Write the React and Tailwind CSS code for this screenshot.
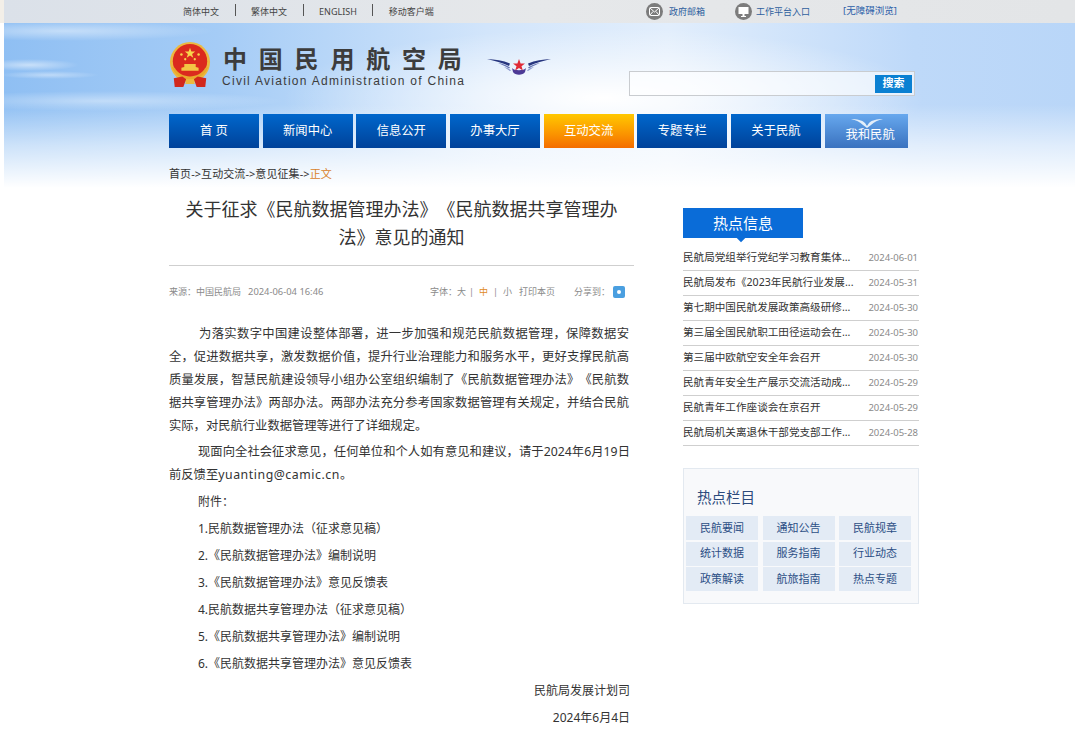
import React from 'react';

const cjk = { fontFamily: '"Noto Sans", "Noto Sans CJK SC", sans-serif' };

const topLinks = ['简体中文', '繁体中文', 'ENGLISH', '移动客户端'];

const navItems = ['首 页', '新闻中心', '信息公开', '办事大厅', '互动交流', '专题专栏', '关于民航'];

const hotNews = [
  ['民航局党组举行党纪学习教育集体...', '2024-06-01'],
  ['民航局发布《2023年民航行业发展...', '2024-05-31'],
  ['第七期中国民航发展政策高级研修...', '2024-05-30'],
  ['第三届全国民航职工田径运动会在...', '2024-05-30'],
  ['第三届中欧航空安全年会召开', '2024-05-30'],
  ['民航青年安全生产展示交流活动成...', '2024-05-29'],
  ['民航青年工作座谈会在京召开', '2024-05-29'],
  ['民航局机关离退休干部党支部工作...', '2024-05-28'],
];

const hotColumns = ['民航要闻', '通知公告', '民航规章', '统计数据', '服务指南', '行业动态', '政策解读', '航旅指南', '热点专题'];

const attachments = [
  '1.民航数据管理办法（征求意见稿）',
  '2.《民航数据管理办法》编制说明',
  '3.《民航数据管理办法》意见反馈表',
  '4.民航数据共享管理办法（征求意见稿）',
  '5.《民航数据共享管理办法》编制说明',
  '6.《民航数据共享管理办法》意见反馈表',
];

function Emblem() {
  return (
    <svg width="42" height="45" viewBox="0 0 44 47" className="shrink-0">
      <circle cx="22" cy="21" r="21" fill="#ecb93f" />
      <circle cx="22" cy="20" r="18" fill="#db2a1e" />
      <polygon points="22,6 23.400,10 27.500,10 24.200,12.500 25.400,16.500 22,14 18.600,16.500 19.800,12.500 16.500,10 20.600,10" fill="#f7d54c" />
      <circle cx="13" cy="13" r="1.300" fill="#f7d54c" />
      <circle cx="31" cy="13" r="1.300" fill="#f7d54c" />
      <circle cx="17" cy="18" r="1.200" fill="#f7d54c" />
      <circle cx="27" cy="18" r="1.200" fill="#f7d54c" />
      <path d="M13 30h18v-3l-3-1v-3h-12v3l-3 1z" fill="#f3c544" />
      <path d="M3 26c3 9 11 13 19 13s16-4 19-13l-3 1c-3 6-10 9-16 9s-13-3-16-9z" fill="#e9a92c" />
      <path d="M5 38l9-2 4 3-3 8H6zM39 38l-9-2-4 3 3 8h9z" fill="#d2281c" />
      <path d="M18 39h8l1 5h-10z" fill="#ecb93f" />
    </svg>
  );
}

function CaacWings() {
  return (
    <svg width="64" height="17" viewBox="0 0 64 17" className="shrink-0">
      <path d="M0 1c8 .5 16 1.500 23 4.500l-1 2.500C15 4.500 8 3 0 1zM64 1c-8 .5-16 1.500-23 4.500l1 2.500c7-3.500 14-5 22-7z" fill="#27367f" />
      <path d="M11 5c4 .5 8 2 12 4.500l-1 1C18 8 15 6.500 11 5zM53 5c-4 .5-8 2-12 4.500l1 1C46 8 49 6.500 53 5z" fill="#6675b4" />
      <path d="M17 9c3 .5 5 1.500 7 3.500l-1 .5c-2-1.500-4-2.500-6-4zM47 9c-3 .5-5 1.500-7 3.500l1 .5c2-1.500 4-2.500 6-4z" fill="#8a97cc" />
      <path d="M25 10c2 3 12 3 14 0l-1 4c-2 3.500-10 3.500-12 0z" fill="#4c3a96" />
      <polygon points="32,1 33.600,5.500 38,5.500 34.500,8.300 35.800,12.500 32,10 28.200,12.500 29.500,8.300 26,5.500 30.400,5.500" fill="#e02a36" />
    </svg>
  );
}

function TopBar() {
  return (
    <div className="h-[23px] bg-gradient-to-r from-[#dbe1e9] via-[#e6e8ea] to-[#e3e5e7] flex items-center pl-[165px] text-[9px] text-[#444]">
      <div className="flex items-center w-[448px]">
        {topLinks.map((t, i) => (
          <React.Fragment key={t}>
            {i > 0 && <span className="w-px h-[12px] bg-[#555] mx-[15.500px] -mt-1" />}
            <span className={i === 0 ? 'ml-[14px]' : ''}>{t}</span>
          </React.Fragment>
        ))}
      </div>
      <div className="flex items-center text-[#2f5f9e] pl-[29px]">
        <span className="w-[17px] h-[17px] rounded-full bg-[#7c7c7c] flex items-center justify-center">
          <svg width="11" height="9" viewBox="0 0 11 9" fill="none" stroke="#fff" strokeWidth="1">
            <rect x="0.5" y="0.5" width="10" height="8" rx="1" />
            <path d="M1 1l4.500 4L10 1M1 8l3-3.500M10 8L7 4.500" />
          </svg>
        </span>
        <span className="ml-[6px] w-[64px]">政府邮箱</span>
        <span className="w-[17px] h-[17px] rounded-full bg-[#7c7c7c] flex items-center justify-center ml-[2px]">
          <svg width="11" height="10" viewBox="0 0 11 10" fill="#fff">
            <rect x="0.5" y="0" width="10" height="7" />
            <rect x="4.500" y="7" width="2" height="2" />
            <rect x="3" y="9" width="5" height="1" />
          </svg>
        </span>
        <span className="ml-[4px] w-[87px]">工作平台入口</span>
        <span className="text-[9.500px] text-[#2b5ea8]">[无障碍浏览]</span>
      </div>
    </div>
  );
}

function Header() {
  return (
    <div className="h-[170px] relative bg-[linear-gradient(180deg,rgba(255,255,255,0)_48%,rgba(255,255,255,0.55)_72%,#ffffff_97%),radial-gradient(ellipse_320px_70px_at_600px_75px,#ffffff_0%,rgba(255,255,255,0)_100%),radial-gradient(ellipse_150px_10px_at_60px_8px,rgba(255,255,255,0.45)_0%,rgba(255,255,255,0)_100%),radial-gradient(ellipse_50px_6px_at_25px_42px,rgba(255,255,255,0.5)_0%,rgba(255,255,255,0)_100%),radial-gradient(ellipse_50px_4px_at_45px_52px,rgba(255,255,255,0.4)_0%,rgba(255,255,255,0)_100%),radial-gradient(ellipse_180px_10px_at_100px_78px,rgba(255,255,255,0.4)_0%,rgba(255,255,255,0)_100%),linear-gradient(90deg,#8fbff3_0%,#a5ccf6_20%,#d2e5fb_45%,#e2eefc_62%,#bed9f9_85%,#b9d6f8_100%)]">
      <div className="pl-[165px] pt-[19px] flex items-start">
        <Emblem />
        <div className="ml-[11px] w-[250px]">
          <div className="pl-[1px] text-[24px] leading-[33px] font-bold text-[#3c3c3c] tracking-[11.800px] whitespace-nowrap">中国民用航空局</div>
          <div className="-mt-[1px] text-[12px] leading-[14px] text-[#3c3c3c] tracking-[1.280px] whitespace-nowrap font-['Liberation_Sans']">Civil Aviation Administration of China</div>
        </div>
        <div className="ml-[15px] mt-[16px]">
          <CaacWings />
        </div>
      </div>
      <div className="absolute left-[625px] top-[48px] w-[286px] h-[25px] border border-[#c9ccd0] bg-white/60 flex items-center justify-end pr-[2px]">
        <span className="w-[37px] h-[18px] bg-[#0a80d2] text-white text-[11px] font-bold flex items-center justify-center">搜索</span>
      </div>
      <nav className="absolute left-[165px] top-[91px] flex gap-[3.670px]">
        {navItems.map((t, i) => (
          <div
            key={t}
            className={
              i === 4
                ? 'w-[90px] h-[34px] flex items-center justify-center text-[12.300px] text-white bg-gradient-to-b from-[#ffc800] to-[#f46c00]'
                : 'w-[90px] h-[34px] flex items-center justify-center text-[12.300px] text-white bg-gradient-to-b from-[#0067cc] to-[#00429a]'
            }
          >
            {t}
          </div>
        ))}
        <div className="w-[83px] h-[34px] bg-gradient-to-b from-[#67a8ee] to-[#3a72bf] text-white text-[12.300px] relative flex items-end justify-center pb-[4px] pl-[8px]">
          <svg width="32" height="10" viewBox="0 0 32 10" className="absolute top-[4px] left-[26px]" fill="#e4effa">
            <path d="M0 1c6 0 11 1 14 4l2 3 2-3c3-3 8-4 14-4-5 1-9 3-12 6l-4 3-4-3C9 4 5 2 0 1z" />
          </svg>
          我和民航
        </div>
      </nav>
      <div className="absolute left-[165px] top-[143px] text-[11px] leading-[16px] text-[#333] tracking-[0.070px]">
        首页-&gt;互动交流-&gt;意见征集-&gt;<span className="text-[#d9822b]">正文</span>
      </div>
    </div>
  );
}

function Article() {
  return (
    <div className="w-[465px]">
      <h1 className="text-[18px] leading-[28px] text-[#333] text-center font-normal px-[16px] pt-[3px]">
        关于征求《民航数据管理办法》《民航数据共享管理办法》意见的通知
      </h1>
      <div className="h-px bg-[#cfcfcf] mt-[14px]" />
      <div className="flex items-center justify-between text-[9px] text-[#8a8a8a] mt-[19px] h-[14px]">
        <div className="flex items-center">
          <span>来源：中国民航局</span>
          <span className="ml-[7px] text-[9.400px]">2024-06-04 16:46</span>
        </div>
        <div className="flex items-center pr-[9px]">
          <span>字体：大</span>
          <span className="ml-[3px] mr-[5px]">|</span>
          <span className="text-[#e08a1e]">中</span>
          <span className="mx-[5px]">|</span>
          <span>小</span>
          <span className="ml-[7px]">打印本页</span>
          <span className="ml-[19px]">分享到：</span>
          <span className="ml-[3px] w-[12px] h-[12px] rounded-[2px] bg-[#4a9fe0] flex items-center justify-center">
            <span className="w-[4px] h-[4px] rounded-full bg-white" />
          </span>
        </div>
      </div>
      <div className="text-[12px] leading-[23px] text-[#333] mt-[23px] pr-[4px] [&>p]:mb-[4px]">
        <p className="text-[12.300px] text-justify indent-[30px] pr-[1px] !mb-[3px]">
          为落实数字中国建设整体部署，进一步加强和规范民航数据管理，保障数据安全，促进数据共享，激发数据价值，提升行业治理能力和服务水平，更好支撑民航高质量发展，智慧民航建设领导小组办公室组织编制了《民航数据管理办法》《民航数据共享管理办法》两部办法。两部办法充分参考国家数据管理有关规定，并结合民航实际，对民航行业数据管理等进行了详细规定。
        </p>
        <p className="text-[12.300px] text-justify indent-[29px]">
          现面向全社会征求意见，任何单位和个人如有意见和建议，请于2024年6月19日前反馈至<span className="tracking-[0.550px]">yuanting@camic.cn</span>。
        </p>
        <p className="indent-[29px]">附件：</p>
        {attachments.map((a) => (
          <p key={a} className="indent-[29px]">{a}</p>
        ))}
        <p className="text-right">民航局发展计划司</p>
        <p className="text-right">2024年6月4日</p>
      </div>
    </div>
  );
}

function Sidebar() {
  return (
    <div className="w-[236px] ml-[49px]">
      <div className="relative w-[120px] h-[30px] bg-[#0a6cd8] text-white text-[15px] flex items-center justify-center mt-[16px]">
        热点信息
        <span className="absolute left-[55px] -bottom-[3px] w-[6px] h-[6px] rotate-45 bg-[#0a6cd8]" />
      </div>
      <ul className="mt-[8px]">
        {hotNews.map(([title, date]) => (
          <li key={date + title} className="h-[25px] border-b border-[#cfcfcf] flex items-center justify-between text-[10.600px] text-[#333]">
            <span className="whitespace-nowrap">{title}</span>
            <span className="text-[9.500px] text-[#8a8a8a] pr-[1px]">{date}</span>
          </li>
        ))}
      </ul>
      <div className="mt-[22px] h-[136px] border border-[#e3e9f0] bg-[#f8f9fb] pl-[2px] pt-[18px]">
        <div className="pl-[11px] text-[14.500px] leading-[20px] text-[#2c4a7c]">热点栏目</div>
        <div className="mt-[9px] grid grid-cols-[72px_72px_72px] gap-x-[4.500px] gap-y-[1.500px]">
          {hotColumns.map((t) => (
            <div key={t} className="h-[24px] bg-[#e3ebf5] text-[#2c4f85] text-[11px] flex items-center justify-center">{t}</div>
          ))}
        </div>
      </div>
    </div>
  );
}

export default function App() {
  return (
    <div style={cjk} className="h-[730px] overflow-hidden bg-white [text-spacing-trim:space-all]">
      <div className="bg-[#f3efe8] h-[23px] absolute left-0 top-0 w-[4px]" />
      <div className="ml-[4px]">
        <TopBar />
        <Header />
      </div>
      <div className="flex pl-[169px] -mt-[1px]">
        <Article />
        <Sidebar />
      </div>
    </div>
  );
}
